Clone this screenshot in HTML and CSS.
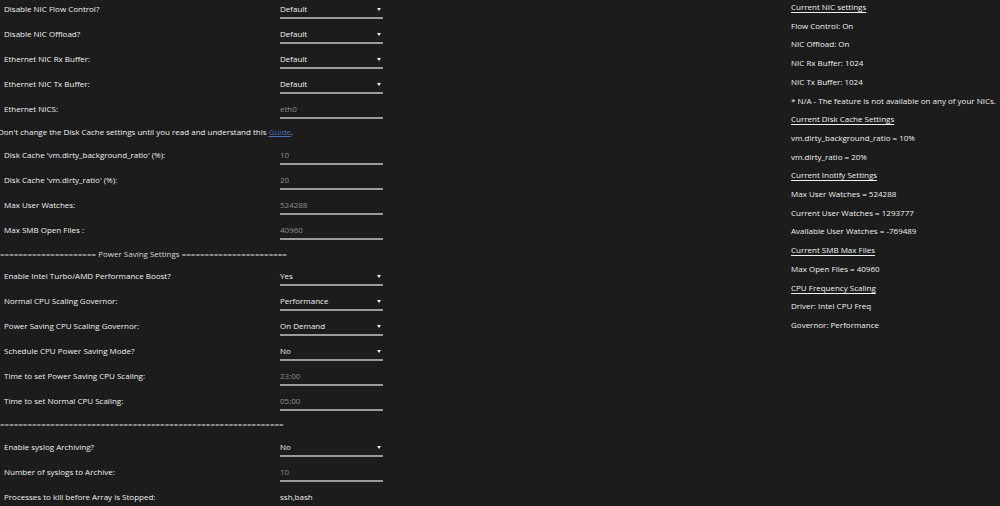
FILE: index.html
```html
<!DOCTYPE html>
<html lang="en">
<head>
    <meta charset="UTF-8">
    <title>Tips and Tweaks</title>
    <link rel="stylesheet" href="styles.css">
</head>
<body>
    <div class="page">
        <div class="settings">
            <div class="row"><span class="label">Disable NIC Flow Control?</span><span class="field select">Default</span></div>
            <div class="row"><span class="label">Disable NIC Offload?</span><span class="field select">Default</span></div>
            <div class="row"><span class="label">Ethernet NIC Rx Buffer:</span><span class="field select">Default</span></div>
            <div class="row"><span class="label">Ethernet NIC Tx Buffer:</span><span class="field select">Default</span></div>
            <div class="row"><span class="label">Ethernet NICS:</span><span class="field input">eth0</span></div>

            <div class="notice">Don't change the Disk Cache settings until you read and understand this <a href="#">Guide</a>.</div>

            <div class="row"><span class="label">Disk Cache 'vm.dirty_background_ratio' (%):</span><span class="field input">10</span></div>
            <div class="row"><span class="label">Disk Cache 'vm.dirty_ratio' (%):</span><span class="field input">20</span></div>
            <div class="row"><span class="label">Max User Watches:</span><span class="field input">524288</span></div>
            <div class="row"><span class="label">Max SMB Open Files :</span><span class="field input">40960</span></div>

            <div class="divider">===================== Power Saving Settings =======================</div>

            <div class="row"><span class="label">Enable Intel Turbo/AMD Performance Boost?</span><span class="field select">Yes</span></div>
            <div class="row"><span class="label">Normal CPU Scaling Governor:</span><span class="field select">Performance</span></div>
            <div class="row"><span class="label">Power Saving CPU Scaling Governor:</span><span class="field select">On Demand</span></div>
            <div class="row"><span class="label">Schedule CPU Power Saving Mode?</span><span class="field select">No</span></div>
            <div class="row"><span class="label">Time to set Power Saving CPU Scaling:</span><span class="field input">23:00</span></div>
            <div class="row"><span class="label">Time to set Normal CPU Scaling:</span><span class="field input">05:00</span></div>

            <div class="divider last">==============================================================</div>

            <div class="row"><span class="label">Enable syslog Archiving?</span><span class="field select">No</span></div>
            <div class="row"><span class="label">Number of syslogs to Archive:</span><span class="field input">10</span></div>
            <div class="row"><span class="label">Processes to kill before Array is Stopped:</span><span class="field plain">ssh,bash</span></div>
        </div>

        <div class="info">
            <p class="heading">Current NIC settings</p>
            <p>Flow Control: On</p>
            <p>NIC Offload: On</p>
            <p>NIC Rx Buffer: 1024</p>
            <p>NIC Tx Buffer: 1024</p>
            <p>* N/A - The feature is not available on any of your NICs.</p>
            <p class="heading">Current Disk Cache Settings</p>
            <p>vm.dirty_background_ratio = 10%</p>
            <p>vm.dirty_ratio = 20%</p>
            <p class="heading">Current Inotify Settings</p>
            <p>Max User Watches = 524288</p>
            <p>Current User Watches = 1293777</p>
            <p>Available User Watches = -769489</p>
            <p class="heading">Current SMB Max Files</p>
            <p>Max Open Files = 40960</p>
            <p class="heading">CPU Frequency Scaling</p>
            <p>Driver: Intel CPU Freq</p>
            <p>Governor: Performance</p>
        </div>
    </div>
</body>
</html>
```

FILE: styles.css
```css
body {
    margin: 0;
    background-color: #1c1c1c;
    color: #f0f0f0;
    font-family: "Open Sans", "Noto Sans", Arial, sans-serif;
    font-size: 8px;
    overflow: hidden;
}
.page {
    display: flex;
    height: 506px;
}
.settings {
    width: 390px;
    padding-left: 4px;
}
.row {
    display: flex;
    height: 25px;
    align-items: flex-start;
}
.label {
    width: 276px;
    padding-top: 3px;
    line-height: 12px;
}
.field {
    box-sizing: border-box;
    width: 103px;
    height: 19px;
    padding-top: 3px;
    line-height: 12px;
    border-bottom: 2px solid #9a9a9a;
    position: relative;
}
.input {
    color: #8c8c8c;
}
.plain {
    border-bottom: none;
}
.select::after {
    content: "";
    position: absolute;
    right: 2px;
    top: 8px;
    border-left: 2px solid transparent;
    border-right: 2px solid transparent;
    border-top: 3px solid #f0f0f0;
}
.notice {
    margin-left: -6px;
    padding: 1px 0 8px;
    line-height: 12px;
    white-space: nowrap;
}
.notice a {
    color: #4a6fc0;
}
.divider {
    margin-left: -4px;
    padding: 2px 0 7px;
    line-height: 12px;
    white-space: nowrap;
    color: #d8d8d8;
}
.divider.last {
    padding: 1px 0 8px;
}
.info {
    margin-left: 397px;
    margin-top: -2px;
}
.info p {
    margin: 0;
    line-height: 18.7px;
    white-space: nowrap;
}
.info .heading {
    text-decoration: underline;
    text-underline-offset: 2px;
}
```
